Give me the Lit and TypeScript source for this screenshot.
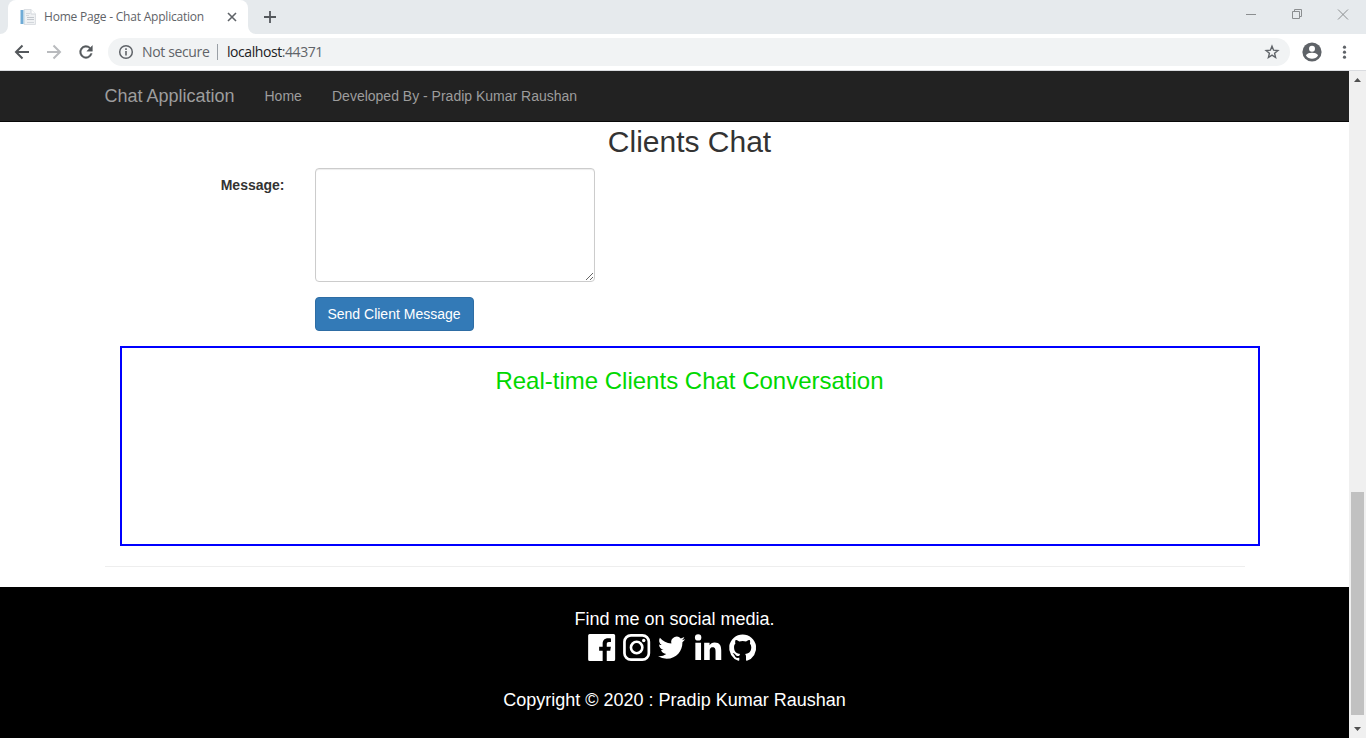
import { LitElement, html, css, svg } from "lit";
import { customElement } from "lit/decorators.js";

@customElement("browser-chrome")
class BrowserChrome extends LitElement {
  static styles = css`
    :host { display: block; height: 71px; flex: none; font-family: "Open Sans", "Noto Sans", sans-serif; color: #5f6368; }
    svg { display: block; flex: none; }
    .tabs { height: 34px; background: #e6eaed; display: flex; align-items: stretch; }
    .curve { width: 8px; height: 34px; }
    .tab { width: 240px; box-sizing: border-box; background: #fff; border-radius: 8px 8px 0 0; display: flex; align-items: center; padding: 0 11px 0 12px; }
    .title { margin-left: 8px; font-size: 12px; line-height: 34px; letter-spacing: -0.21px; white-space: nowrap; flex: 1; }
    .plus { margin: 11px 0 0 8px; }
    .win { margin-left: auto; }
    .bar { height: 36px; background: #fff; border-bottom: 1px solid #dadce0; display: flex; align-items: center; }
    .nav { width: 108px; height: 36px; }
    .omni { width: 1182px; height: 28px; box-sizing: border-box; background: #f1f3f4; border-radius: 14px; display: flex; align-items: center; padding: 0 10px 0 10px; font-size: 14px; white-space: nowrap; }
    .ns { margin-left: 8px; width: 67px; letter-spacing: -0.36px; }
    .sep { width: 1px; height: 16px; background: #9aa0a6; margin: 0 9px 0 8px; }
    .url { flex: 1; letter-spacing: -0.43px; }
    .host { color: #202124; }
  `;
  render() {
    return html`
      <div class="tabs">
        <svg class="curve" viewBox="0 0 8 34"><path d="M8 26V34H0A8 8 0 0 0 8 26Z" fill="#fff"/></svg>
        <div class="tab">
          <svg width="16" height="16" viewBox="0 0 16 16">
            <path d="M4 .5H11L15.500 5V15.500H4Z" fill="#eff1f3" stroke="#dcdfe3"/>
            <path d="M.5 1H3.500V15H.5Z" fill="#6fabd6"/><path d="M3.500 1H4.500V15H3.500Z" fill="#c2d9e8"/>
            <path d="M6 4.500H10M6 6.500H9M7 13.500H14" stroke="#d3d7dc"/>
            <path d="M7 8.500H14M7 10.500H14" stroke="#c2c7cd"/>
            <path d="M11 .5V5H15.500" fill="#fff" stroke="#d3d7dc"/>
          </svg>
          <span class="title">Home Page - Chat Application</span>
          <svg width="10" height="10" viewBox="0 0 10 10"><path d="M1 1L9 9M9 1L1 9" stroke="#5f6368" stroke-width="1.600"/></svg>
        </div>
        <svg class="curve" viewBox="0 0 8 34"><path d="M0 26V34H8A8 8 0 0 1 0 26Z" fill="#fff"/></svg>
        <svg class="plus" width="12" height="12" viewBox="0 0 12 12"><path d="M6 0V12M0 6H12" stroke="#54585c" stroke-width="1.800"/></svg>
        <svg class="win" width="120" height="34" viewBox="1246 0 120 34" fill="none" stroke="#8b8e90" stroke-width="1">
          <path d="M1246 14.500H1256M1292.500 11.500H1299.500V18.500H1292.500ZM1294.500 11V9.500H1301.500V16.500H1300M1338 9.500L1348 19.500M1348 9.500L1338 19.500"/>
        </svg>
      </div>
      <div class="bar">
        <svg class="nav" viewBox="0 34 108 36" fill="none" stroke-width="2">
          <path d="M29 52H16.500M22.500 45.500L16 52L22.500 58.500" stroke="#54585c"/>
          <path d="M47 52H59.500M53.500 45.500L60 52L53.500 58.500" stroke="#b9bbbe"/>
          <g transform="translate(76.400 42.400) scale(.8)"><path d="M17.650 6.350A8 8 0 1 0 19.730 14H17.650A6 6 0 1 1 16.220 7.780L13 11H20V4Z" fill="#54585c" stroke="#54585c" stroke-width=".5"/></g>
        </svg>
        <div class="omni">
          <svg width="16" height="16" viewBox="0 0 16 16"><circle cx="8" cy="8" r="6.300" fill="none" stroke="#5f6368" stroke-width="1.500"/><path d="M8 7V11.500M8 4.300V5.900" stroke="#5f6368" stroke-width="1.600"/></svg>
          <span class="ns">Not secure</span><span class="sep"></span>
          <span class="url"><span class="host">localhost</span>:44371</span>
          <svg width="16" height="16" viewBox="0 0 16 16"><path d="M8 2.200L9.600 6.200L13.900 6.500L10.600 9.300L11.600 13.500L8 11.200L4.400 13.500L5.400 9.300L2.100 6.500L6.400 6.200Z" fill="none" stroke="#5f6368" stroke-width="1.400"/></svg>
        </div>
        <svg width="76" height="36" viewBox="1290 34 76 36" fill="#5f6368">
          <circle cx="1312" cy="52" r="9.600"/><circle cx="1312" cy="48.700" r="3" fill="#fff"/>
          <path d="M1306 55.600C1306.500 53.500 1310 52.800 1312 52.800S1317.500 53.500 1318 55.600C1315.500 59.900 1308.500 59.900 1306 55.600Z" fill="#fff"/>
          <circle cx="1344.500" cy="47.200" r="1.600"/><circle cx="1344.500" cy="52.200" r="1.600"/><circle cx="1344.500" cy="57.200" r="1.600"/>
        </svg>
      </div>`;
  }
}

const socialIcons = [
  svg`<path d="M1.500 0H25.500A1.500 1.500 0 0 1 27 1.500V25.500A1.500 1.500 0 0 1 25.500 27H18.600V16.700H22.100L22.700 12.700H18.600V10.200C18.600 9 19.200 8.100 20.800 8.100H22.800V4.600C22.100 4.500 21 4.300 19.900 4.300C16.500 4.300 14.500 6.400 14.500 9.900V12.700H11V16.700H14.500V27H1.500A1.500 1.500 0 0 1 0 25.500V1.500A1.500 1.500 0 0 1 1.500 0Z"/>`,
  svg`<rect x="1.300" y="1.300" width="24.400" height="24.400" rx="6.500" fill="none" stroke="#fff" stroke-width="2.700"/><circle cx="13.500" cy="13.500" r="5.700" fill="none" stroke="#fff" stroke-width="2.600"/><circle cx="20.600" cy="6.500" r="1.700"/>`,
  svg`<path transform="translate(-.1 .1) scale(1.130)" d="M23.950 4.570a10 10 0 0 1-2.830.78 4.960 4.960 0 0 0 2.160-2.730c-.95.560-2 .96-3.120 1.190a4.920 4.920 0 0 0-8.390 4.480C7.690 8.100 4.070 6.130 1.640 3.160a4.920 4.920 0 0 0 1.520 6.570 4.900 4.900 0 0 1-2.230-.61v.06c0 2.380 1.700 4.370 3.950 4.830a5 5 0 0 1-2.210.08 4.940 4.940 0 0 0 4.600 3.420A9.870 9.870 0 0 1 0 19.540a14 14 0 0 0 7.550 2.210c9.050 0 14-7.500 14-13.980 0-.21 0-.42-.02-.63a9.940 9.940 0 0 0 2.460-2.550z"/>`,
  svg`<circle cx="4" cy="3.400" r="3.200"/><path d="M1.200 8.700H6.900V26H1.200ZM10 8.700H15.400V11.200C16.300 9.500 18.100 8.400 20.400 8.400C25.700 8.400 27.100 11.600 27.100 16.400V26H21.400V17.700C21.400 15.500 21.200 13.300 18.600 13.300C16 13.300 15.600 15.200 15.600 17.400V26H10Z"/>`,
  svg`<path transform="translate(0 .1) scale(1.125)" d="M12 .3a12 12 0 0 0-3.790 23.390c.6.110.82-.26.820-.58v-2.030c-3.340.73-4.040-1.610-4.040-1.610-.55-1.390-1.340-1.760-1.340-1.760-1.090-.74.080-.73.080-.73 1.210.09 1.840 1.240 1.840 1.240 1.070 1.830 2.810 1.300 3.490 1 .11-.78.420-1.310.760-1.610-2.660-.3-5.470-1.330-5.470-5.930 0-1.310.47-2.380 1.240-3.220-.12-.3-.54-1.520.12-3.180 0 0 1.010-.32 3.300 1.230a11.500 11.500 0 0 1 6 0c2.290-1.550 3.300-1.230 3.300-1.230.66 1.660.24 2.880.12 3.180a4.650 4.650 0 0 1 1.230 3.220c0 4.610-2.800 5.620-5.480 5.920.43.370.81 1.100.81 2.220v3.290c0 .32.220.69.830.57A12 12 0 0 0 12 .3"/>`,
];

@customElement("app-root")
class AppRoot extends LitElement {
  static styles = css`
    :host { display: flex; flex-direction: column; width: 1366px; height: 738px; overflow: hidden; background: #fff; font: 14px/20px "Liberation Sans", Arial, sans-serif; color: #333; }
    * { box-sizing: border-box; }
    .view { flex: 1; display: flex; min-height: 0; }
    .page { flex: 1; display: flex; flex-direction: column; }
    .nav { height: 51px; flex: none; background: #222; border-bottom: 1px solid #080808; padding-left: 104.500px; display: flex; align-items: center; color: #9d9d9d; white-space: nowrap; }
    .brand { font-size: 18px; margin-right: 30px; width: 130px; }
    .home { width: 37.500px; margin-right: 30px; }
    .main { width: 1140px; margin-left: 120px; flex: none; }
    h2 { margin: 0; padding: 3px 1px 0 0; font-size: 30px; line-height: 33px; font-weight: 400; text-align: center; }
    .row { display: flex; margin-top: 10px; }
    label { width: 164.500px; margin-right: 30.500px; padding-top: 7px; text-align: right; font-weight: 700; }
    textarea { display: block; width: 280px; height: 114px; padding: 6px 12px; border: 1px solid #ccc; border-radius: 4px; font: inherit; background: #fff; box-shadow: inset 0 1px 1px rgba(0,0,0,.075); resize: both; outline: none; }
    button { display: block; margin: 15px 0 15px 195px; width: 159px; height: 34px; padding: 0 1px 0 0; border: 1px solid #2e6da4; border-radius: 4px; background: #337ab7; color: #fff; font: inherit; white-space: nowrap; }
    .chat { height: 200px; border: 2px solid #00f; padding-top: 20px; }
    h3 { margin: 0; padding-right: 1px; font-size: 24px; line-height: 26px; font-weight: 400; text-align: center; color: #00d800; }
    hr { margin: 20px 0 20px 105px; width: 1140px; height: 1px; border: 0; background: #eee; flex: none; }
    footer { flex: 1; background: #000; color: #fff; font-size: 18px; line-height: 26px; display: flex; flex-direction: column; align-items: center; padding-top: 19px; }
    .icons { display: flex; gap: 8px; height: 27px; margin: 2px 0 26px; padding-right: 5px; }
    .icons svg { display: block; fill: #fff; width: 27.300px; height: 27px; overflow: visible; }
    .scroll { width: 17px; background: #f0f0f0; display: flex; flex-direction: column; align-items: center; }
    .scroll svg { display: block; width: 17px; height: 17px; fill: #505050; }
    .track { flex: 1; padding-top: 404px; }
    .thumb { width: 13px; height: 223px; background: #c1c1c1; }
  `;
  render() {
    return html`
      <browser-chrome></browser-chrome>
      <div class="view">
        <div class="page">
          <nav class="nav"><span class="brand">Chat Application</span><span class="home">Home</span><span>Developed By - Pradip Kumar Raushan</span></nav>
          <main class="main">
            <h2>Clients Chat</h2>
            <div class="row"><label for="msg">Message:</label><textarea id="msg"></textarea></div>
            <button>Send Client Message</button>
            <section class="chat"><h3>Real-time Clients Chat Conversation</h3></section>
          </main>
          <hr>
          <footer>
            <div>Find me on social media.</div>
            <div class="icons">${socialIcons.map((i) => html`<svg viewBox="0 0 27 27">${i}</svg>`)}</div>
            <div>Copyright © 2020 : Pradip Kumar Raushan</div>
          </footer>
        </div>
        <div class="scroll">
          <svg viewBox="0 0 17 17"><path d="M5 11L8.500 7L12 11Z"/></svg>
          <div class="track"><div class="thumb"></div></div>
          <svg viewBox="0 0 17 17"><path d="M5 6L8.500 10L12 6Z"/></svg>
        </div>
      </div>`;
  }
}
